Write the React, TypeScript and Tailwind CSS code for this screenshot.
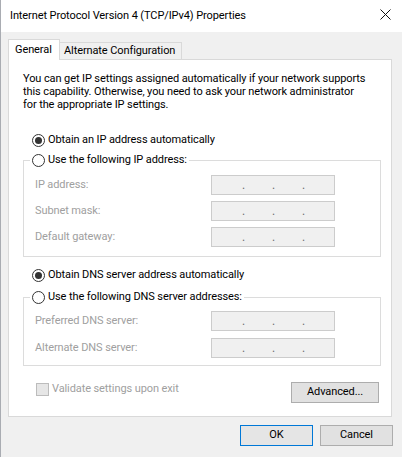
import React from 'react';

const font = { fontFamily: 'Roboto, "Liberation Sans", sans-serif' };

const Radio = ({ checked }: { checked?: boolean }) => (
  <span className="flex h-[13px] w-[13px] shrink-0 items-center justify-center rounded-full border border-[#333333] bg-white">
    {checked && <span className="h-[7px] w-[7px] rounded-full bg-[#333333]" />}
  </span>
);

const IpBox = () => (
  <div className="flex h-[20px] w-[124px] shrink-0 items-center border border-[#cccccc] bg-[#f0f0f0] pl-[3px] text-[12px] leading-none text-[#6d6d6d]">
    <span className="w-[30px] text-right">.</span>
    <span className="w-[30px] text-right">.</span>
    <span className="w-[30px] text-right">.</span>
  </div>
);

const FieldRow = ({ label }: { label: string }) => (
  <div className="flex items-center">
    <span className="flex-1 pl-[11px] text-[#a0a0a0]">{label}</span>
    <IpBox />
  </div>
);

const RadioRow = ({ checked, label }: { checked?: boolean; label: string }) => (
  <label className="flex h-[16px] items-center gap-[3px] text-black">
    <Radio checked={checked} />
    <span>{label}</span>
  </label>
);

const Button = ({ children, primary, className }: { children: React.ReactNode; primary?: boolean; className?: string }) => (
  <button
    className={`flex items-center justify-center border text-black ${
      primary ? 'border-[#0078d7] bg-[#e5e5e5]' : 'border-[#adadad] bg-[#e1e1e1]'
    } ${className ?? ''}`}
  >
    {children}
  </button>
);

export default function App() {
  return (
    <div
      className="flex h-[457px] w-[402px] flex-col overflow-hidden border-l border-[#a9acb2] bg-[#f0f0f0] text-[11px] tracking-[-0.1px]"
      style={font}
    >
      {/* title bar */}
      <div className="flex h-[32px] shrink-0 items-center justify-between bg-white pl-[9px] pr-[11px]">
        <span className="text-black">Internet Protocol Version 4 (TCP/IPv4) Properties</span>
        <svg width="11" height="11" viewBox="0 0 11 11" className="mb-[4px]">
          <path d="M0.5 0.5 L10.5 10.5 M10.5 0.5 L0.5 10.5" stroke="#111" strokeWidth="1" />
        </svg>
      </div>

      <div className="flex flex-col pl-[7px] pt-[7px]">
        {/* tabs */}
        <div className="relative z-10 flex h-[20px] items-end">
          <div className="-mb-px flex h-[21px] w-[52px] items-center border border-b-0 border-[#d9d9d9] bg-white pl-[6px] text-black">
            General
          </div>
          <div className="flex h-[17px] w-[122px] items-center whitespace-nowrap border border-b-0 border-l-0 border-[#d9d9d9] bg-[#f0f0f0] pl-[4px] text-black">
            Alternate Configuration
          </div>
        </div>

        {/* panel */}
        <div className="flex h-[358px] w-[384px] flex-col border border-[#d9d9d9] bg-white pl-[14px] pr-[10px] pt-[12px]">
          <p className="whitespace-nowrap leading-[13px] text-black">
            You can get IP settings assigned automatically if your network supports
            <br />
            this capability. Otherwise, you need to ask your network administrator
            <br />
            for the appropriate IP settings.
          </p>

          <div className="mt-[21px] pl-[9px]">
            <RadioRow checked label="Obtain an IP address automatically" />
          </div>

          <fieldset className="mt-[4px] border border-[#dcdcdc] pb-[9px] pr-[45px]">
            <legend className="ml-[6px] bg-white px-[2px]">
              <RadioRow label="Use the following IP address:" />
            </legend>
            <div className="flex flex-col gap-[6px] pt-[7px]">
              <FieldRow label="IP address:" />
              <FieldRow label="Subnet mask:" />
              <FieldRow label="Default gateway:" />
            </div>
          </fieldset>

          <div className="mt-[10px] pl-[9px]">
            <RadioRow checked label="Obtain DNS server address automatically" />
          </div>

          <fieldset className="mt-[6px] border border-[#dcdcdc] pb-[7px] pr-[45px]">
            <legend className="ml-[6px] bg-white px-[2px]">
              <RadioRow label="Use the following DNS server addresses:" />
            </legend>
            <div className="flex flex-col gap-[7px] pt-[6px]">
              <FieldRow label="Preferred DNS server:" />
              <FieldRow label="Alternate DNS server:" />
            </div>
          </fieldset>

          <div className="mt-[15px] flex items-start justify-between pr-[2px]">
            <label className="flex items-center gap-[3px] pl-[13px] text-[#a0a0a0]">
              <span className="h-[13px] w-[13px] border border-[#bcbcbc] bg-[#e6e6e6]" />
              <span>Validate settings upon exit</span>
            </label>
            <Button className="mt-[1px] h-[21px] w-[88px]">Advanced...</Button>
          </div>
        </div>

        {/* dialog buttons */}
        <div className="mt-[8px] flex justify-end gap-[7px] pr-[9px]">
          <Button primary className="h-[21px] w-[73px]">OK</Button>
          <Button className="h-[21px] w-[73px]">Cancel</Button>
        </div>
      </div>
    </div>
  );
}
